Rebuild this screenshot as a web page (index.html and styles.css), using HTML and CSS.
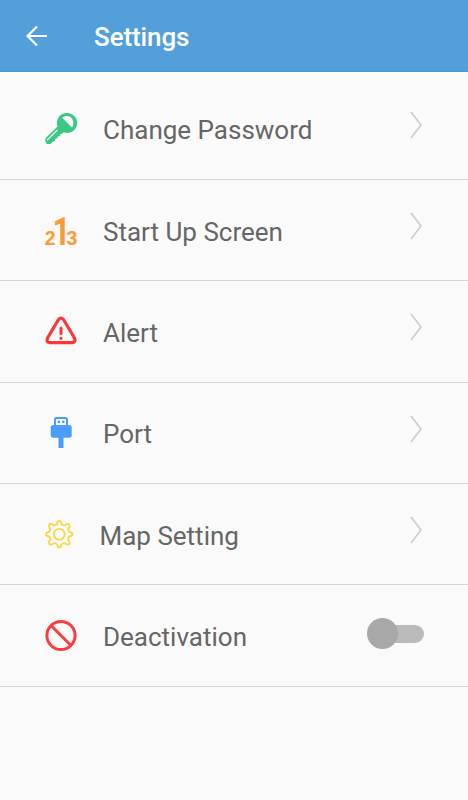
FILE: index.html
```html
<!DOCTYPE html>
<html lang="en">

<head>
  <meta charset="UTF-8" />
  <meta name="viewport" content="width=device-width, initial-scale=1.0" />
  <title>Settings</title>
  <link rel="stylesheet" href="styles.css">
</head>

<body>
  <header class="topbar">
    <svg class="back" viewBox="0 0 22 22">
      <path d="M21 11H2M11 1.5L1.5 11L11 20.5" />
    </svg>
    <h1>Settings</h1>
  </header>

  <main class="list">
    <div class="row">
      <svg class="icon" viewBox="0 0 32 32">
        <path fill="#3cc885" fill-rule="evenodd" d="M22 0A10 10 0 1 1 18.5 19.3L17 20.8L15.5 21L15 23L12.8 23.5L12.5 25.3L10.3 26L10 28L8 28.5L5.5 31L1.5 31L.3 28V25.5L12.5 13.5A10 10 0 0 1 22 0ZM17.2 4.8C21 1.5 25.5 3 27.3 6C29 9 28.5 12.5 27 14.5Z" />
        <path stroke="#fafafa" stroke-width="1.1" d="M2 27.2L12.5 17" />
      </svg>
      <span class="label">Change Password</span>
      <svg class="chevron" viewBox="0 0 12 28"><path d="M1 1L11 14L1 27" /></svg>
    </div>

    <div class="row">
      <svg class="icon" viewBox="0 0 32 32">
        <g class="digits">
          <text x="-.2" y="30" font-size="19.5">2</text>
          <text class="first" x="7.6" y="30" font-size="38" textLength="18" lengthAdjust="spacingAndGlyphs">1</text>
          <text x="21.6" y="30" font-size="19.5">3</text>
        </g>
      </svg>
      <span class="label">Start Up Screen</span>
      <svg class="chevron" viewBox="0 0 12 28"><path d="M1 1L11 14L1 27" /></svg>
    </div>

    <div class="row">
      <svg class="icon" viewBox="0 0 32 32">
        <g fill="none" stroke="#fc3638" stroke-linecap="round" stroke-linejoin="round">
          <path stroke-width="3.2" d="M13.5 3.5Q16 .8 18.5 3.5L29.6 22.3Q31 26.2 27.5 26.6H4.5Q1 26.2 2.4 22.3Z" />
          <path stroke-width="3" d="M16 12V17.5M16 22.3V22.4" />
        </g>
      </svg>
      <span class="label">Alert</span>
      <svg class="chevron" viewBox="0 0 12 28"><path d="M1 1L11 14L1 27" /></svg>
    </div>

    <div class="row">
      <svg class="icon" viewBox="0 0 32 32">
        <g fill="#4a9dfb">
          <path fill-rule="evenodd" d="M9 9V2.5Q9 0 11.5 0H20.5Q23 0 23 2.5V9ZM11 8H21V3Q21 2 20 2H12Q11 2 11 3Z" />
          <rect x="12.7" y="3.7" width="2.4" height="2.3" />
          <rect x="17" y="3.7" width="2.4" height="2.3" />
          <rect x="5.7" y="8" width="21" height="12.8" rx="2.5" />
          <rect x="13.5" y="20" width="5" height="11" />
        </g>
      </svg>
      <span class="label">Port</span>
      <svg class="chevron" viewBox="0 0 12 28"><path d="M1 1L11 14L1 27" /></svg>
    </div>

    <div class="row">
      <svg class="icon icon-gear" viewBox="0 0 28 28">
        <g fill="none" stroke="#fbd63c" stroke-width="1.8" stroke-linejoin="round">
          <path d="M11.8 4L12.3 1.8Q14 .3 15.7 1.8L16.2 4Q18 5.8 19.8 5L21.5 3.9Q24.5 3.5 24.1 6.5L23 8.2Q22.2 10 24 11.8L26.2 12.3Q27.7 14 26.2 15.7L24 16.2Q22.2 18 23 19.8L24.1 21.5Q24.5 24.5 21.5 24.1L19.8 23Q18 22.2 16.2 24L15.7 26.2Q14 27.7 12.3 26.2L11.8 24Q10 22.2 8.2 23L6.5 24.1Q3.5 24.5 3.9 21.5L5 19.8Q5.8 18 4 16.2L1.8 15.7Q.3 14 1.8 12.3L4 11.8Q5.8 10 5 8.2L3.9 6.5Q3.5 3.5 6.5 3.9L8.2 5Q10 5.8 11.8 4Z" />
          <circle cx="14" cy="14" r="5.3" />
        </g>
      </svg>
      <span class="label">Map Setting</span>
      <svg class="chevron" viewBox="0 0 12 28"><path d="M1 1L11 14L1 27" /></svg>
    </div>

    <div class="row">
      <svg class="icon" viewBox="0 0 32 32">
        <g fill="none" stroke="#fc3c3e" stroke-width="3">
          <circle cx="16" cy="15.5" r="14.1" />
          <path d="M6 5.5L26 25.5" />
        </g>
      </svg>
      <span class="label">Deactivation</span>
      <span class="switch"><span class="thumb"></span></span>
    </div>
  </main>
</body>

</html>
```

FILE: styles.css
```css
* {
  box-sizing: border-box;
  margin: 0;
  padding: 0;
}

body {
  background: #fafafa;
  color: #666;
  font-family: Roboto, sans-serif;
}

.topbar {
  display: flex;
  align-items: center;
  height: 72px;
  padding-left: 26px;
  background: #539fd9;
  border-bottom: 1px solid #4b96cf;
}

.back {
  width: 22px;
  height: 22px;
  fill: none;
  stroke: #fff;
  stroke-width: 2.2;
}

h1 {
  margin-left: 46px;
  padding-top: 2px;
  font-size: 26px;
  font-weight: 500;
  line-height: 32px;
  letter-spacing: -0.1px;
  color: #fff;
}

.list {
  padding-top: 6.67px;
}

.row {
  display: flex;
  align-items: center;
  height: 101.33px;
  padding: 0 44px 0 45px;
  border-bottom: 1px solid #d6d6d6;
}

.icon {
  flex: none;
  width: 32px;
  height: 32px;
  margin-top: 0.8px;
  overflow: visible;
}

.icon-gear {
  width: 28.5px;
  height: 28.5px;
}

.digits {
  fill: #fd9a35;
  font-family: "Liberation Sans", sans-serif;
  font-weight: bold;
}

.digits .first {
  font-family: Roboto, sans-serif;
}

.label {
  flex: 1;
  margin-left: 26px;
  padding-top: 2.8px;
  font-size: 26px;
  line-height: 32px;
}

.chevron {
  width: 12px;
  height: 28px;
  margin-right: 2px;
  margin-bottom: 8px;
  fill: none;
  stroke: #cdcdcd;
  stroke-width: 1.7;
}

.switch {
  display: flex;
  align-items: center;
  width: 57px;
  height: 18px;
  margin-bottom: 3px;
  background: linear-gradient(to right, transparent 15px, #bababa 15px);
  border-radius: 9px;
}

.thumb {
  flex: none;
  width: 31px;
  height: 31px;
  background: #a8a8a8;
  border-radius: 50%;
}
```
